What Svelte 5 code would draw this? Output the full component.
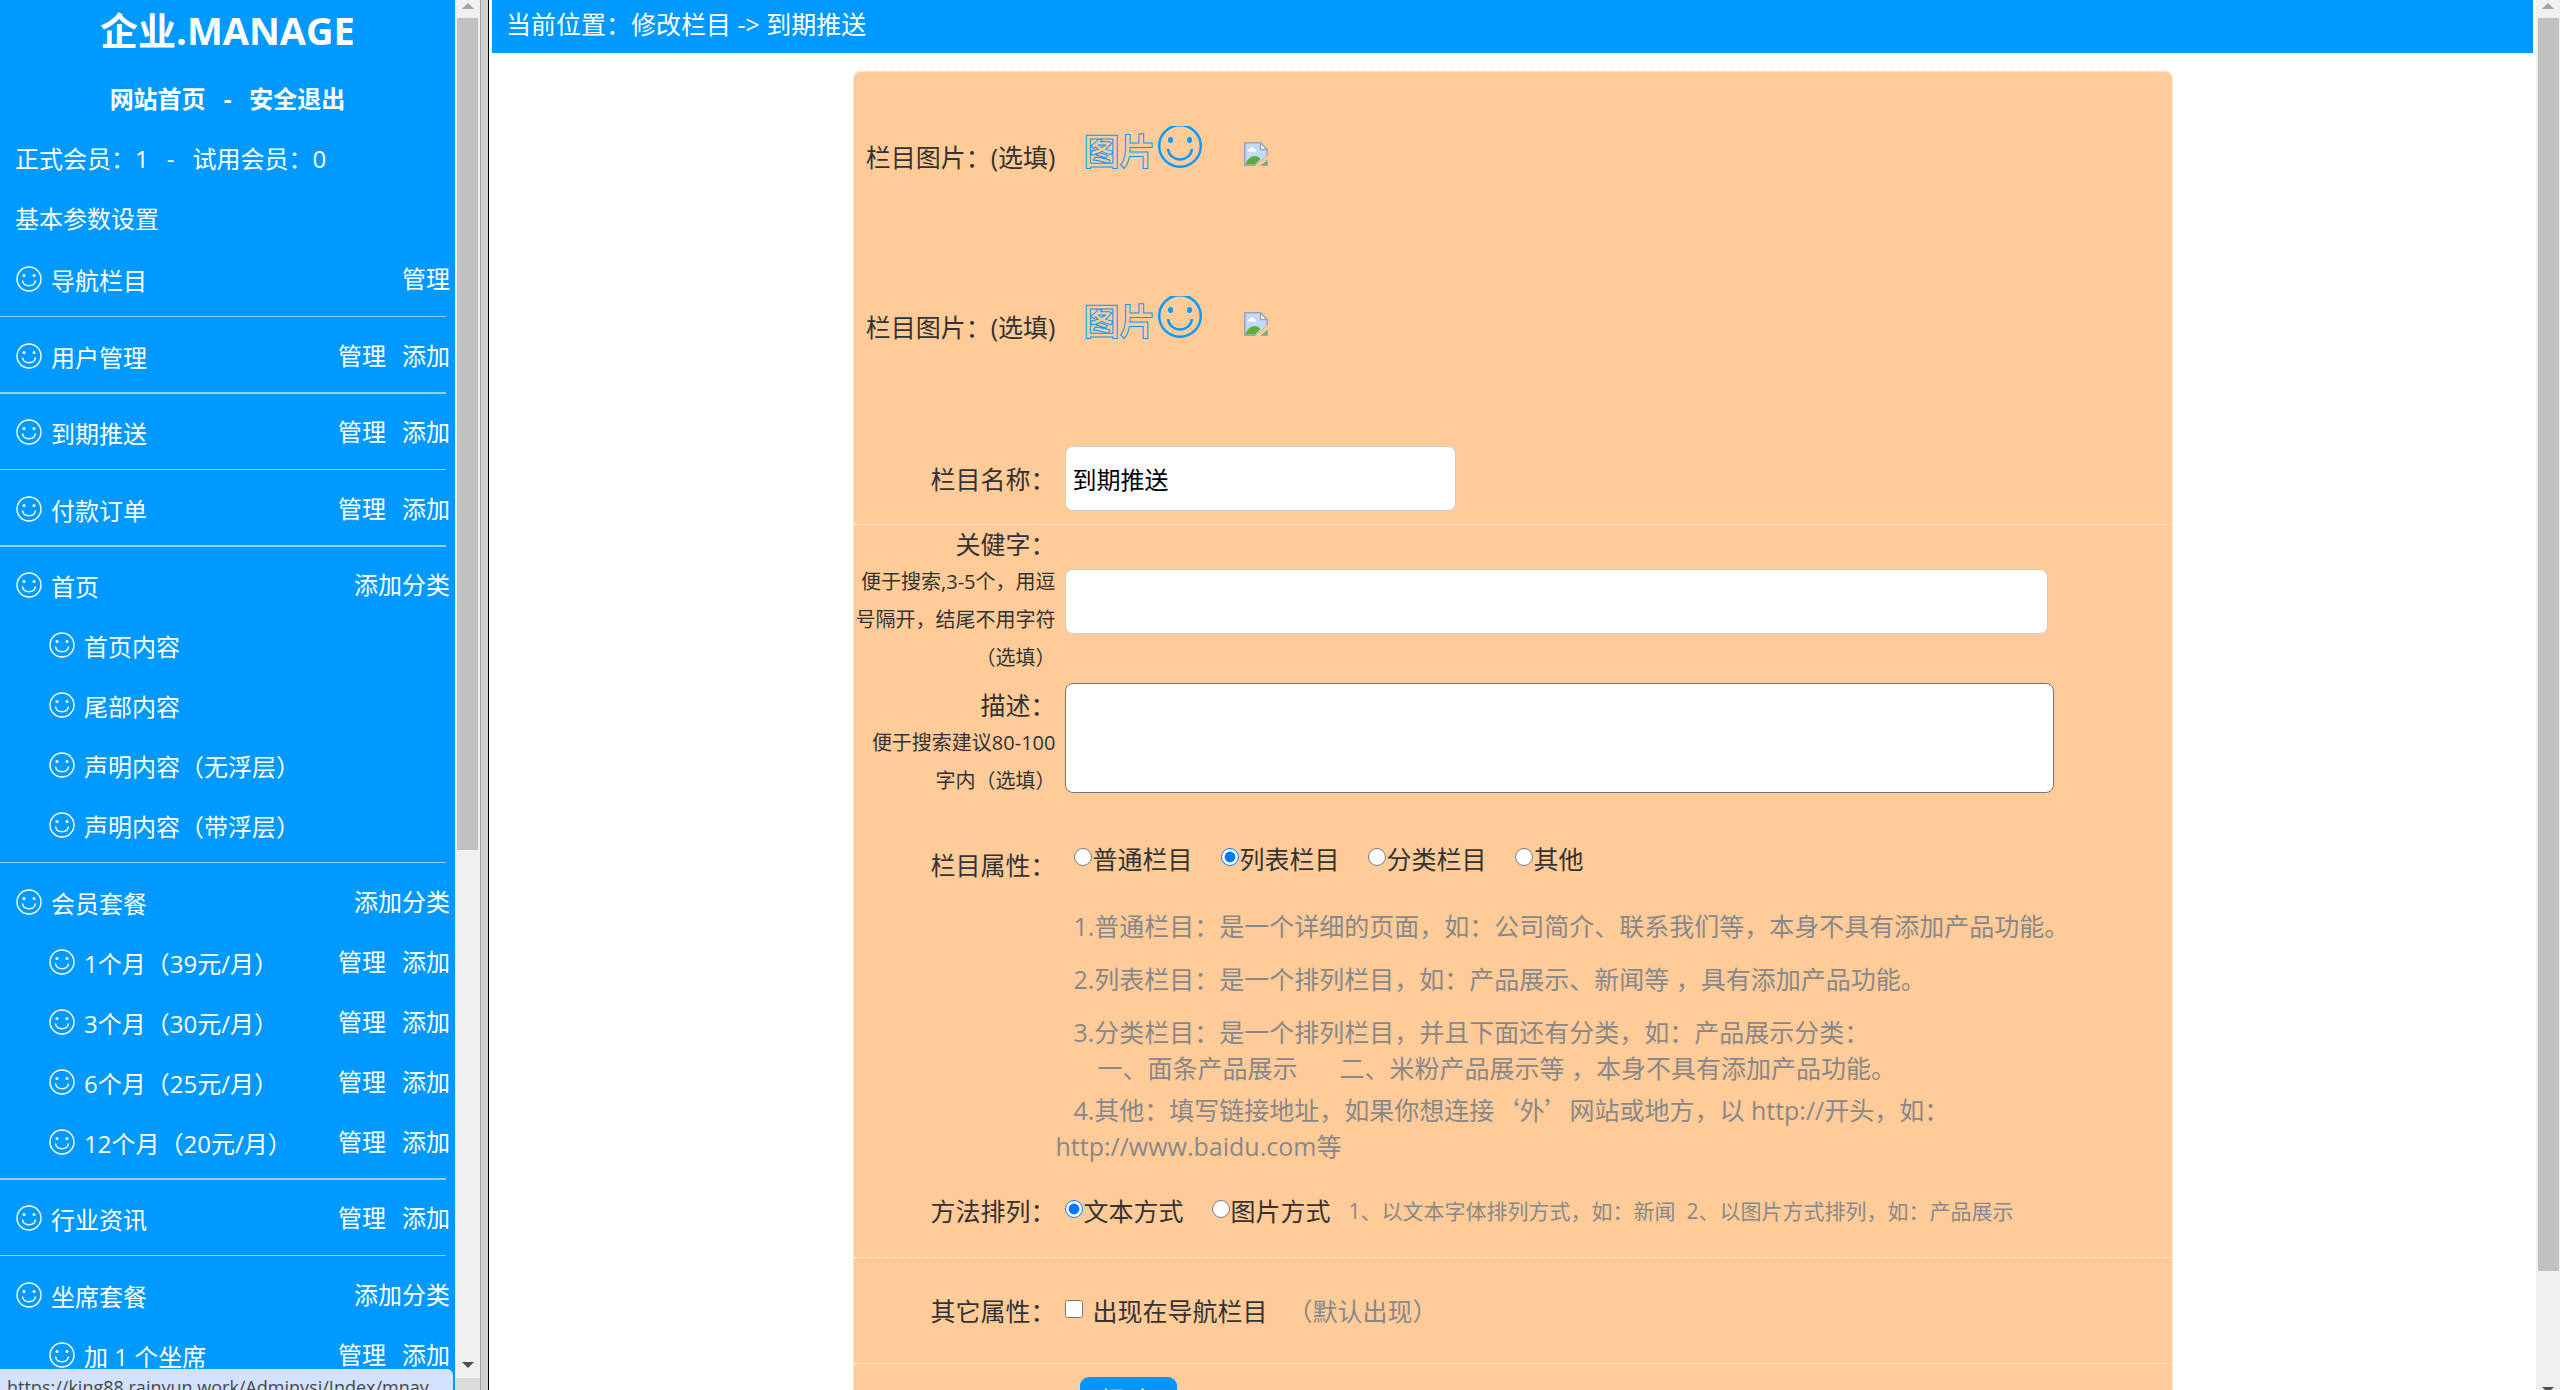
<script>
  const both = ['管理', '添加'];

  const menu = [
    { name: '导航栏目', links: ['管理'] },
    { name: '用户管理', links: both },
    { name: '到期推送', links: both },
    { name: '付款订单', links: both },
    {
      name: '首页',
      links: ['添加分类'],
      items: [
        { name: '首页内容' },
        { name: '尾部内容' },
        { name: '声明内容（无浮层）' },
        { name: '声明内容（带浮层）' }
      ]
    },
    {
      name: '会员套餐',
      links: ['添加分类'],
      items: [
        { name: '1个月（39元/月）', links: both },
        { name: '3个月（30元/月）', links: both },
        { name: '6个月（25元/月）', links: both },
        { name: '12个月（20元/月）', links: both }
      ]
    },
    { name: '行业资讯', links: both },
    {
      name: '坐席套餐',
      links: ['添加分类'],
      items: [{ name: '加 1 个坐席', links: both }]
    }
  ];

  const types = ['普通栏目', '列表栏目', '分类栏目', '其他'];
  const layouts = ['文本方式', '图片方式'];

  let type = $state('列表栏目');
  let layout = $state('文本方式');
  let title = $state('到期推送');
  let keywords = $state('');
  let description = $state('');
  let inNav = $state(false);
</script>

{#snippet menuRow(row, sub)}
  <div class="row" class:sub>
    <svg class="smile" viewBox="0 0 26 26" fill="none" stroke="white">
      <circle cx="13" cy="13" r="12" stroke-width="1.4" />
      <path d="M6.5 14.5C7.5 21.5 18.5 21.5 19.5 14.5" stroke-width="1.5" />
      <circle cx="8" cy="9.5" r="1.5" fill="white" stroke="none" />
      <circle cx="18" cy="9.5" r="1.5" fill="white" stroke="none" />
    </svg>
    <a class="name" href="#menu">{row.name}</a>
    <span class="links">
      {#each row.links ?? [] as link}
        <a href="#menu">{link}</a>
      {/each}
    </span>
  </div>
{/snippet}

{#snippet pictureRow()}
  <div class="field picture">
    <div class="label">栏目图片：(选填)</div>
    <div class="control">
      <a class="pick" href="#upload">
        <span>图片</span>
        <svg width="44" height="42" viewBox="0 2 44 42" fill="none" stroke="#0099ff">
          <circle cx="22" cy="22" r="20.8" stroke-width="2.4" />
          <path d="M10 25C12 39 32 39 34 25" stroke-width="2.4" />
          <ellipse cx="12.500" cy="16" rx="2.500" ry="3" fill="#0099ff" stroke="none" />
          <ellipse cx="31.500" cy="16" rx="2.500" ry="3" fill="#0099ff" stroke="none" />
        </svg>
      </a>
      <svg class="broken" width="24" height="24" viewBox="0 0 24 24">
        <path d="M0.800 0.800H16.500L23.200 7.500V14L12.500 23.200H0.800Z" fill="#c3dafa" stroke="#a0a4aa" stroke-width="1.600" />
        <path d="M16.500 1V7.500H23Z" fill="white" stroke="#a0a4aa" stroke-width="1.400" />
        <path d="M3.500 9.500C3.500 7.500 5 7.200 5.600 7.200C6 4.500 9.500 4.500 10 7C12.500 7 12.500 9.500 12 9.500Z" fill="white" />
        <path d="M1.600 22.400C3 17 7 14 10.500 14C13 14 15 15 16.500 17L11 22.400Z" fill="#5cae38" />
        <path d="M24 13V17L16 24H11Z" fill="#ffcc99" />
        <path d="M16.500 24L24 17.500V24Z" fill="#5cae38" />
        <path d="M23.200 18V23.200H17" fill="none" stroke="#a0a4aa" stroke-width="1.600" />
      </svg>
    </div>
  </div>
{/snippet}

<div class="page">
  <nav>
    <h1>企业.MANAGE</h1>
    <div class="top">
      <a href="#home">网站首页</a><span>-</span><a href="#logout">安全退出</a>
    </div>
    <div class="info"><span>正式会员：1</span><span>-</span><span>试用会员：0</span></div>
    <div class="info"><a href="#settings">基本参数设置</a></div>
    {#each menu as group}
      <div class="group">
        {@render menuRow(group, false)}
        {#each group.items ?? [] as item}
          {@render menuRow(item, true)}
        {/each}
      </div>
    {/each}
    <div class="status">https://king88.rainyun.work/Adminysi/Index/mnav</div>
  </nav>

  <div class="bar navbar">
    <i class="up"></i>
    <div class="thumb"></div>
    <i class="down"></i>
    <div class="corner"></div>
  </div>
  <div class="splitter"></div>

  <main>
    <header>当前位置：修改栏目 -> 到期推送</header>
    <form>
      {@render pictureRow()}
      {@render pictureRow()}

      <div class="field title line">
        <label class="label" for="title">栏目名称：</label>
        <div class="control"><input id="title" class="text short" type="text" bind:value={title} /></div>
      </div>

      <div class="field">
        <label class="label" for="keywords">
          关健字：
          <small>便于搜索,3-5个，用逗<br />号隔开，结尾不用字符<br />（选填）</small>
        </label>
        <div class="control"><input id="keywords" class="text" type="text" bind:value={keywords} /></div>
      </div>

      <div class="field desc">
        <label class="label" for="description">
          描述：
          <small>便于搜索建议80-100<br />字内（选填）</small>
        </label>
        <div class="control"><textarea id="description" bind:value={description}></textarea></div>
      </div>

      <div class="field type">
        <div class="label">栏目属性：</div>
        <div class="control">
          {#each types as t}
            <label class="choice"><input type="radio" name="type" value={t} bind:group={type} />{t}</label>
          {/each}
        </div>
      </div>

      <div class="notes">
        <p>1.普通栏目：是一个详细的页面，如：公司简介、联系我们等，本身不具有添加产品功能。</p>
        <p>2.列表栏目：是一个排列栏目，如：产品展示、新闻等 ，具有添加产品功能。</p>
        <p>
          3.分类栏目：是一个排列栏目，并且下面还有分类，如：产品展示分类：<br />
          <span class="example">一、面条产品展示</span><span class="example">二、米粉产品展示等 ，本身不具有添加产品功能。</span>
        </p>
        <p class="last">
          4.其他：填写链接地址，如果你想连接<span class="cjk">‘外’</span>网站或地方，以 http://开头，如：<br />http://www.baidu.com等
        </p>
      </div>

      <div class="field layout line">
        <div class="label">方法排列：</div>
        <div class="control">
          {#each layouts as l}
            <label class="choice"><input type="radio" name="layout" value={l} bind:group={layout} />{l}</label>
          {/each}
          <span class="hint">1、以文本字体排列方式，如：新闻&nbsp; 2、以图片方式排列，如：产品展示</span>
        </div>
      </div>

      <div class="field other line">
        <div class="label">其它属性：</div>
        <div class="control">
          <label class="check"><input type="checkbox" bind:checked={inNav} />出现在导航栏目</label>
          <span class="default">（默认出现）</span>
        </div>
      </div>

      <div class="submit"><button type="button">提 交</button></div>
    </form>
  </main>

  <div class="bar">
    <i class="up"></i>
    <div class="thumb"></div>
    <i class="down"></i>
  </div>
</div>

<style>
  :global(body) {
    margin: 0;
    background: #fff;
  }
  .page {
    display: flex;
    height: 100vh;
    overflow: hidden;
    font-family: "Open Sans", "Noto Sans CJK SC", sans-serif;
    font-size: 24px;
    color: #333;
  }
  .page * {
    box-sizing: border-box;
  }
  a {
    color: inherit;
    text-decoration: none;
  }

  /* sidebar */
  nav {
    position: relative;
    flex: 0 0 455px;
    overflow: hidden;
    background: #0099ff;
    color: #fff;
    white-space: nowrap;
  }
  h1 {
    margin: 0;
    height: 69px;
    line-height: 60px;
    font-size: 38px;
    text-align: center;
  }
  .top,
  .info {
    display: flex;
    gap: 18px;
    height: 60px;
    line-height: 60px;
  }
  .top {
    justify-content: center;
    font-weight: bold;
  }
  .info {
    padding-left: 15px;
  }
  .group + .group::before {
    content: "";
    display: block;
    width: 446px;
    height: 1px;
    margin: 7px 0 9px;
    background: #99ccff;
  }
  .group + .group:nth-child(odd)::before {
    height: 2px;
    margin: 6px 0 8px;
  }
  .row {
    display: flex;
    align-items: center;
    height: 60px;
    line-height: 60px;
    padding: 0 5px 0 16px;
  }
  .row.sub {
    padding-left: 49px;
  }
  .smile {
    width: 26px;
    height: 26px;
    margin-right: 9px;
  }
  .name {
    padding-top: 3px;
  }
  .links {
    display: flex;
    gap: 16px;
    margin-left: auto;
  }
  .status {
    position: absolute;
    left: 0;
    bottom: 0;
    width: 453px;
    height: 21px;
    padding: 3px 7px 0;
    overflow: hidden;
    border-top-right-radius: 6px;
    background: #d3e3fd;
    color: #474747;
    font-size: 18px;
    line-height: 30px;
  }

  /* scroll bars */
  .bar {
    display: flex;
    flex-direction: column;
    flex: 0 0 24px;
    background: #f0f0f0;
  }
  .navbar {
    flex-basis: 25px;
  }
  .thumb {
    height: 1253px;
    margin: 9px 1px 0 2px;
    background: #c1c1c1;
  }
  .navbar .thumb {
    height: 832px;
    margin-right: 2px;
  }
  .up,
  .down {
    align-self: center;
    width: 0;
    border: 6px solid transparent;
  }
  .up {
    margin-top: 3px;
    border-top: 0;
    border-bottom-color: #a3a3a3;
  }
  .down {
    margin-top: auto;
    border-bottom: 0;
    border-top-color: #505050;
  }
  .bar:not(.navbar) .down {
    margin-bottom: -3px;
  }
  .corner {
    height: 12px;
    margin-top: 10px;
    background: #dcdcdc;
  }
  .splitter {
    flex: 0 0 9px;
    border-left: 1px solid #a0a0a0;
    border-right: 1px solid #000;
    background: #d0d0d0;
  }

  /* content */
  main {
    flex: 1;
    overflow: hidden;
    padding: 0 3px;
    font-size: 25px;
  }
  header {
    height: 53px;
    padding-left: 14px;
    line-height: 48px;
    background: #0099ff;
    color: #fff;
  }
  form {
    max-width: 1320px;
    margin: 18px auto 0;
    padding-bottom: 40px;
    border: 1px dotted #fff;
    border-radius: 8px;
    background: #ffcc99;
  }
  .field {
    display: grid;
    grid-template-columns: 202px 1fr;
    align-items: center;
  }
  .line {
    border-bottom: 1px dotted #fff;
  }
  .label {
    line-height: 38px;
    text-align: right;
    white-space: nowrap;
  }
  small {
    display: block;
    font-size: 20px;
  }
  .control {
    display: flex;
    align-items: center;
    padding-left: 9px;
    line-height: 36px;
    white-space: nowrap;
  }
  .picture {
    height: 170px;
  }
  .picture .control {
    align-items: flex-end;
    padding: 0 0 20px 28px;
  }
  .pick {
    display: flex;
    align-items: flex-end;
    margin-right: 42px;
  }
  .pick span {
    width: 74px;
    color: transparent;
    font-size: 36px;
    line-height: 32px;
    font-weight: bold;
    -webkit-text-stroke: 1px #0099ff;
  }
  .broken {
    margin-bottom: 2px;
  }
  .title {
    padding: 34px 0 13px;
  }
  .text {
    width: 983px;
    height: 65px;
    padding: 0 7px;
    border: 1px solid #ccc;
    border-radius: 8px;
    background: #fff;
    color: #000;
    font: inherit;
    font-size: 24px;
  }
  .short {
    width: 391px;
  }
  .desc {
    align-items: start;
    padding-top: 6px;
    min-height: 123px;
  }
  .desc .label {
    padding-top: 3px;
  }
  textarea {
    width: 989px;
    height: 110px;
    border: 1px solid #767676;
    border-radius: 8px;
    background: #fff;
    font: inherit;
    resize: none;
  }
  .type {
    height: 100px;
    padding-top: 30px;
  }
  .type .control {
    padding: 0 0 12px 18px;
  }
  .choice,
  .check {
    display: flex;
    align-items: center;
    margin-right: 28px;
  }
  .choice input,
  .check input {
    width: 18px;
    height: 18px;
    margin: 0 1px 4px 0;
  }
  .check input {
    margin-right: 10px;
  }
  .notes {
    padding: 8px 0 0 202px;
    line-height: 36px;
    color: #888;
  }
  .notes p {
    margin: 0 0 17px;
    text-indent: 18px;
  }
  .notes p:nth-child(3) {
    margin-bottom: 5px;
  }
  .notes p.last {
    margin-bottom: 0;
  }
  .example {
    padding-left: 42px;
    text-indent: 0;
  }
  .cjk {
    font-family: "Noto Sans CJK SC", sans-serif;
  }
  .layout {
    height: 94px;
  }
  .layout .choice + .choice {
    margin-right: 18px;
  }
  .hint {
    color: #888;
    font-size: 21px;
  }
  .other {
    height: 106px;
  }
  .check {
    margin-right: 20px;
  }
  .default {
    color: #888;
  }
  .submit {
    padding: 13px 0 0 226px;
  }
  button {
    width: 97px;
    height: 42px;
    border: 0;
    border-radius: 9px;
    background: linear-gradient(#0099ff, #0088ee);
    color: #fff;
    font: inherit;
    font-size: 24px;
  }
</style>
